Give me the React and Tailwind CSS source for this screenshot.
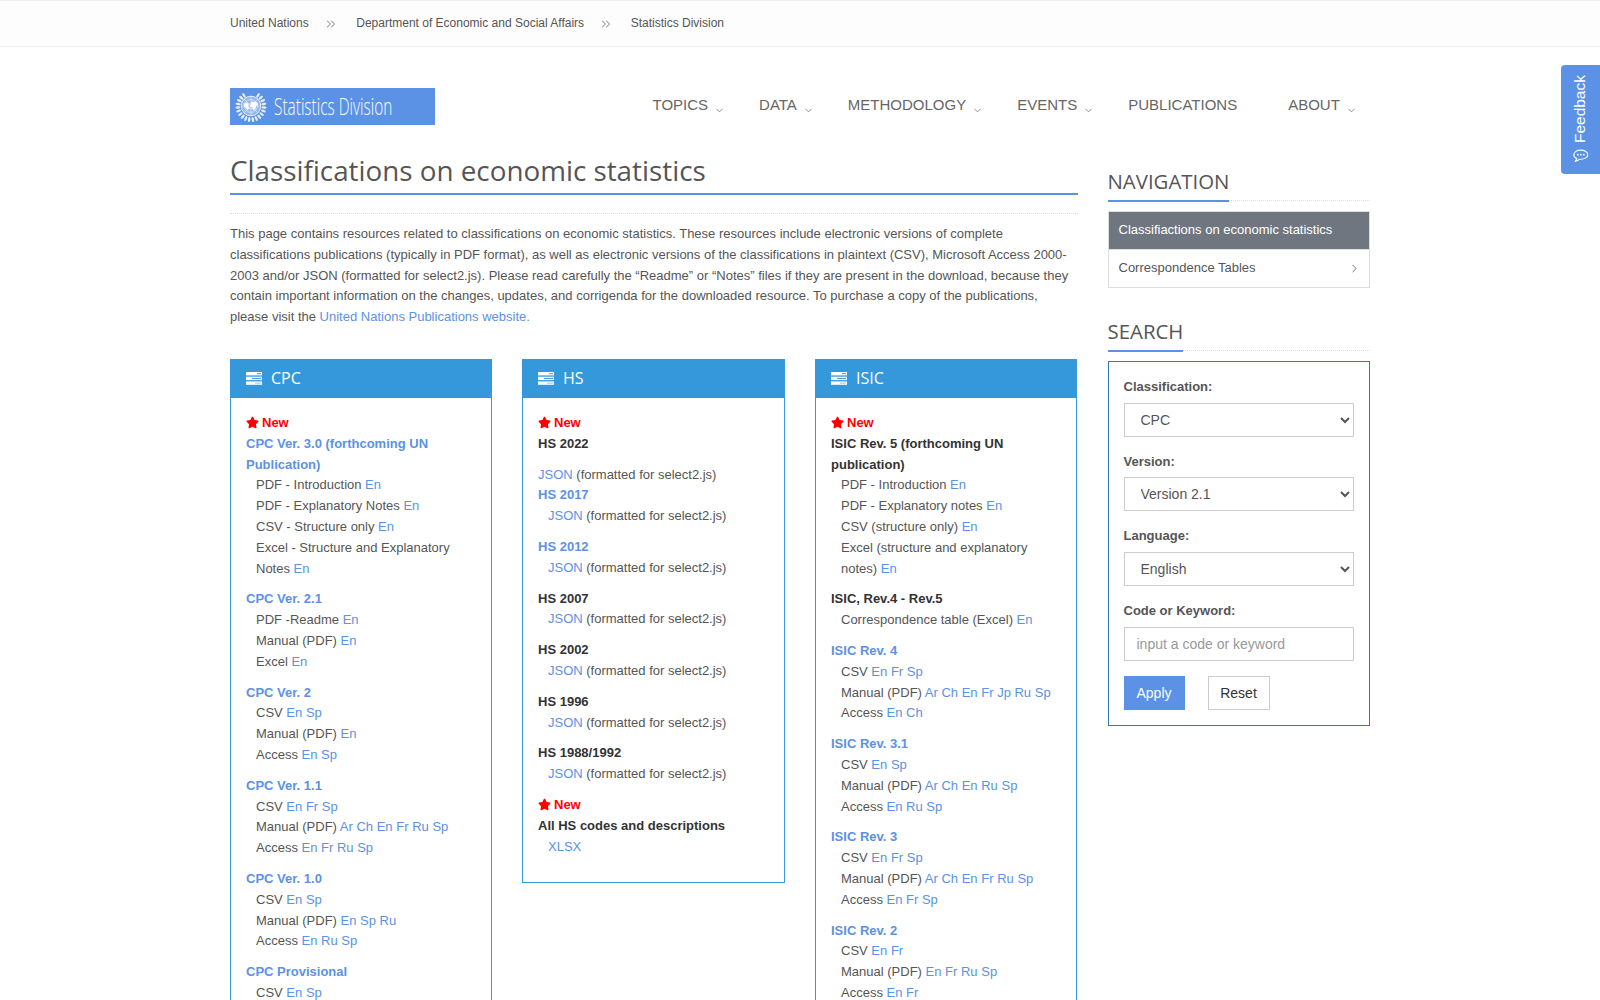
import { ChevronDown, ChevronRight, ChevronsRight } from 'lucide-react';
import { FaStar } from 'react-icons/fa';

const heading = "font-['Open_Sans',sans-serif]";

const cpc = [
  {
    isNew: true,
    title: ['CPC Ver. 3.0 (forthcoming UN Publication)'],
    rows: [
      ['PDF - Introduction', 'En'],
      ['PDF - Explanatory Notes', 'En'],
      ['CSV - Structure only', 'En'],
      ['Excel - Structure and Explanatory Notes', 'En'],
    ],
  },
  { title: ['CPC Ver. 2.1'], rows: [['PDF -Readme', 'En'], ['Manual (PDF)', 'En'], ['Excel', 'En']] },
  { title: ['CPC Ver. 2'], rows: [['CSV', 'En Sp'], ['Manual (PDF)', 'En'], ['Access', 'En Sp']] },
  { title: ['CPC Ver. 1.1'], rows: [['CSV', 'En Fr Sp'], ['Manual (PDF)', 'Ar Ch En Fr Ru Sp'], ['Access', 'En Fr Ru Sp']] },
  { title: ['CPC Ver. 1.0'], rows: [['CSV', 'En Sp'], ['Manual (PDF)', 'En Sp Ru'], ['Access', 'En Ru Sp']] },
  { title: ['CPC Provisional'], rows: [['CSV', 'En Sp']] },
];

const select2 = '(formatted for select2.js)';

const hs = [
  { isNew: true, dark: true, title: ['HS 2022'], rows: [] },
  { plain: true, title: [], rows: [] },
  { title: ['HS 2017'], rows: [['', 'JSON', select2]] },
  { title: ['HS 2012'], rows: [['', 'JSON', select2]] },
  { dark: true, title: ['HS 2007'], rows: [['', 'JSON', select2]] },
  { dark: true, title: ['HS 2002'], rows: [['', 'JSON', select2]] },
  { dark: true, title: ['HS 1996'], rows: [['', 'JSON', select2]] },
  { dark: true, title: ['HS 1988/1992'], rows: [['', 'JSON', select2]] },
  { isNew: true, dark: true, title: ['All HS codes and descriptions'], rows: [['', 'XLSX']] },
];

const isic = [
  {
    isNew: true,
    dark: true,
    title: ['ISIC Rev. 5 (forthcoming UN publication)'],
    rows: [
      ['PDF - Introduction', 'En'],
      ['PDF - Explanatory notes', 'En'],
      ['CSV (structure only)', 'En'],
      ['Excel (structure and explanatory notes)', 'En'],
    ],
  },
  { dark: true, title: ['ISIC, Rev.4 - Rev.5'], rows: [['Correspondence table (Excel)', 'En']] },
  { title: ['ISIC Rev. 4'], rows: [['CSV', 'En Fr Sp'], ['Manual (PDF)', 'Ar Ch En Fr Jp Ru Sp'], ['Access', 'En Ch']] },
  { title: ['ISIC Rev. 3.1'], rows: [['CSV', 'En Sp'], ['Manual (PDF)', 'Ar Ch En Ru Sp'], ['Access', 'En Ru Sp']] },
  { title: ['ISIC Rev. 3'], rows: [['CSV', 'En Fr Sp'], ['Manual (PDF)', 'Ar Ch En Fr Ru Sp'], ['Access', 'En Fr Sp']] },
  { title: ['ISIC Rev. 2'], rows: [['CSV', 'En Fr'], ['Manual (PDF)', 'En Fr Ru Sp'], ['Access', 'En Fr']] },
];

function UnEmblem() {
  const leaves = [];
  for (let i = 0; i < 10; i++) {
    const a = 172 - i * 15.5;
    leaves.push(
      <ellipse key={`l${i}`} cx="17" cy="2.4" rx="1.2" ry="2.6" fill="#fff" fillOpacity="0.85" transform={`rotate(${a} 17 15.5)`} />,
      <ellipse key={`r${i}`} cx="17" cy="2.4" rx="1.2" ry="2.6" fill="#fff" fillOpacity="0.85" transform={`rotate(${-a} 17 15.5)`} />
    );
  }
  return (
    <svg width="34" height="31" viewBox="0 0 34 31" className="shrink-0">
      {leaves}
      <circle cx="17" cy="15" r="9.8" fill="#fff" fillOpacity="0.35" stroke="#fff" strokeWidth="0.8" />
      <circle cx="17" cy="15" r="6.4" fill="none" stroke="#fff" strokeOpacity="0.75" strokeWidth="0.7" />
      <circle cx="17" cy="15" r="3" fill="none" stroke="#fff" strokeOpacity="0.75" strokeWidth="0.7" />
      <path d="M7.2 15h19.6M17 5.2v19.6M10 8l14 14M24 8L10 22" stroke="#fff" strokeOpacity="0.75" strokeWidth="0.6" />
      <path d="M9.5 12.5l3.5-1 1.5 2-.5 2 1.5 2.5-2 .5-3-2.5z" fill="#fff" />
      <path d="M16.5 14l1.5-3.5 5 .5 1 2.5-2 1.5-.5 3-2.5 1.5-.5-3-2-.5z" fill="#fff" />
    </svg>
  );
}

function ServerIcon() {
  return (
    <svg width="16" height="13" viewBox="0 0 16 13" className="shrink-0">
      <rect y="0" width="16" height="3.4" fill="#fff" />
      <rect y="4.7" width="16" height="3.4" fill="#fff" />
      <rect y="9.4" width="16" height="3.4" fill="#fff" />
      <rect x="11" y="1.2" width="4" height="1" fill="#3498db" />
      <rect x="6" y="5.9" width="9" height="1" fill="#3498db" />
      <rect x="9" y="10.6" width="6" height="1" fill="#a9bfcf" />
    </svg>
  );
}

function FeedbackIcon() {
  return (
    <svg width="16" height="14" viewBox="0 0 16 14" fill="none" className="rotate-180 shrink-0">
      <path d="M8 1C4.1 1 1 3 1 5.6c0 1.6 1.1 3 2.9 3.8-.1.9-.6 2-1.5 2.9 1.7-.2 3.3-1 4.4-2.2H8c3.9 0 7-2 7-4.5S11.9 1 8 1z" stroke="#fff" strokeWidth="1.1" strokeLinejoin="round" />
      <circle cx="5" cy="5.6" r="0.9" fill="#fff" />
      <circle cx="8" cy="5.6" r="0.9" fill="#fff" />
      <circle cx="11" cy="5.6" r="0.9" fill="#fff" />
    </svg>
  );
}

function Links({ text }) {
  return text.split(' ').map((t, i) => (
    <span key={i}>
      {i > 0 && ' '}
      <a href="#" className="text-[#5b92e5]">{t}</a>
    </span>
  ));
}

function Group({ group }) {
  if (group.plain) {
    return (
      <p>
        <a href="#" className="text-[#5b92e5]">JSON</a> {select2}
      </p>
    );
  }
  return (
    <div className="mb-[10px]">
      {group.isNew && (
        <p className="flex items-center gap-[3px] font-bold text-[#ff0000]">
          <FaStar className="text-[13px] -mt-[1px]" /> New
        </p>
      )}
      <p className={`font-bold ${group.dark ? 'text-[#333]' : 'text-[#5b92e5]'}`}>{group.title[0]}</p>
      {group.rows.map(([label, links, after], i) => (
        <p key={i} className="pl-[10px]">
          {label && `${label} `}
          <Links text={links} />
          {after && ` ${after}`}
        </p>
      ))}
    </div>
  );
}

function ClassPanel({ title, groups }) {
  return (
    <div className="self-start">
      <div className="h-[39px] bg-[#3498db] flex items-center gap-[9px] pl-[16px] text-white">
        <ServerIcon />
        <span className={`${heading} text-[16px]`}>{title}</span>
      </div>
      <div className="border border-[#3498db] border-t-0 p-[15px]">
        {groups.map((g, i) => (
          <Group key={i} group={g} />
        ))}
      </div>
    </div>
  );
}

function SideHeading({ children, className = '' }) {
  return (
    <div className={`border-b border-dotted border-[#ddd] h-[33px] ${className}`}>
      <span className={`${heading} inline-block h-[34px] border-b-2 border-[#5b92e5] text-[20.4px] leading-[26px] text-[#555] uppercase`}>
        {children}
      </span>
    </div>
  );
}

function Field({ label, children }) {
  return (
    <div className="mb-[15px]">
      <label className="block mb-[5px] font-bold">{label}</label>
      {children}
    </div>
  );
}

const fieldClass = 'block w-full h-[34px] border border-[#ccc] bg-white pl-3 text-[14px] text-[#555]';

export default function App() {
  return (
    <div className="relative h-[1000px] overflow-hidden bg-white font-['Liberation_Sans',Arial,sans-serif] text-[13px] leading-[20.8px] text-[#555]">
      {/* top breadcrumb */}
      <div className="h-[47px] border-y border-[#eee] bg-[#fdfdfd]">
        <div className="w-[1140px] mx-auto h-full flex items-center text-[12px] text-[#555]">
          <span>United Nations</span>
          <ChevronsRight size={14} strokeWidth={1.75} className="ml-[15px] mr-[18.5px] text-[#999]" />
          <span>Department of Economic and Social Affairs</span>
          <ChevronsRight size={14} strokeWidth={1.75} className="ml-[15px] mr-[17.5px] text-[#999]" />
          <span>Statistics Division</span>
        </div>
      </div>

      <div className="w-[1140px] mx-auto">
        {/* logo + nav */}
        <div className="flex items-start mt-[41px]">
          <div className="w-[205px] h-[37px] bg-[#5b92e5] flex items-center pl-[4px] text-white overflow-hidden">
            <UnEmblem />
            <span className={`${heading} ml-[6px] whitespace-nowrap text-[23px] font-light origin-left scale-x-[0.67]`}>Statistics Division</span>
          </div>
          <nav className="flex ml-[217.5px] gap-[51px] text-[15px] leading-[34px] text-[#666]">
            {['TOPICS', 'DATA', 'METHODOLOGY', 'EVENTS', 'PUBLICATIONS', 'ABOUT'].map((item) => (
              <span key={item} className="relative">
                {item}
                {item !== 'PUBLICATIONS' && (
                  <ChevronDown size={11} strokeWidth={1.75} className="absolute -right-[17px] top-[17px] text-[#777]" />
                )}
              </span>
            ))}
          </nav>
        </div>

        <div className="flex gap-[30px] mt-[26px]">
          {/* main column */}
          <div className="w-[847.5px] shrink-0">
            <h1 className={`${heading} text-[27.8px] leading-[38px] pb-[4px] border-b-2 border-[#5b92e5] text-[#555]`}>
              Classifications on economic statistics
            </h1>
            <div className="mt-[18px] border-t border-dotted border-[#ddd]" />
            <p className="mt-[10px] mb-[31px]">
              This page contains resources related to classifications on economic statistics. These resources include electronic versions of complete classifications publications (typically in PDF format), as well as electronic versions of the classifications in plaintext (CSV), Microsoft Access 2000-2003 and/or JSON (formatted for select2.js). Please read carefully the “Readme” or “Notes” files if they are present in the download, because they contain important information on the changes, updates, and corrigenda for the downloaded resource. To purchase a copy of the publications, please visit the <a href="#" className="text-[#5b92e5]">United Nations Publications website.</a>
            </p>
            <div className="grid grid-cols-[262px_263px_262px] gap-[30px]">
              <ClassPanel title="CPC" groups={cpc} />
              <ClassPanel title="HS" groups={hs} />
              <ClassPanel title="ISIC" groups={isic} />
            </div>
          </div>

          {/* sidebar */}
          <aside className="w-[262.5px] shrink-0 pt-[17px]">
            <SideHeading>Navigation</SideHeading>
            <div className="mt-[10px] border border-[#ddd]">
              <div className="h-[37px] pl-[10px] flex items-center bg-[#6f7680] text-white">Classifiactions on economic statistics</div>
              <div className="h-[38px] pl-[10px] pr-[8px] flex items-center justify-between border-t border-[#ddd]">
                Correspondence Tables
                <ChevronRight size={13} strokeWidth={1.5} className="text-[#555]" />
              </div>
            </div>

            <SideHeading className="mt-[30px]">Search</SideHeading>
            <form className="mt-[9.8px] border border-[#337ab7] p-[15px]">
              <Field label="Classification:">
                <select className={fieldClass} defaultValue="CPC">
                  <option>CPC</option>
                </select>
              </Field>
              <Field label="Version:">
                <select className={fieldClass} defaultValue="Version 2.1">
                  <option>Version 2.1</option>
                </select>
              </Field>
              <Field label="Language:">
                <select className={fieldClass} defaultValue="English">
                  <option>English</option>
                </select>
              </Field>
              <Field label="Code or Keyword:">
                <input className={`${fieldClass} placeholder:text-[#999]`} placeholder="input a code or keyword" />
              </Field>
              <div className="flex gap-[23px]">
                <button type="button" className="w-[61px] h-[34px] bg-[#5b92e5] text-white text-[14px]">Apply</button>
                <button type="button" className="w-[62px] h-[34px] border border-[#ccc] bg-white text-[#333] text-[14px]">Reset</button>
              </div>
            </form>
          </aside>
        </div>
      </div>

      {/* feedback tab */}
      <div className="fixed right-0 top-[65px] w-[39px] h-[109px] rounded-l-[4px] bg-[#5b92e5] text-white text-[15.5px] flex items-center justify-center">
        <div className="[writing-mode:vertical-rl] rotate-180 flex items-center gap-[6px]">
          <FeedbackIcon />
          Feedback
        </div>
      </div>
    </div>
  );
}
